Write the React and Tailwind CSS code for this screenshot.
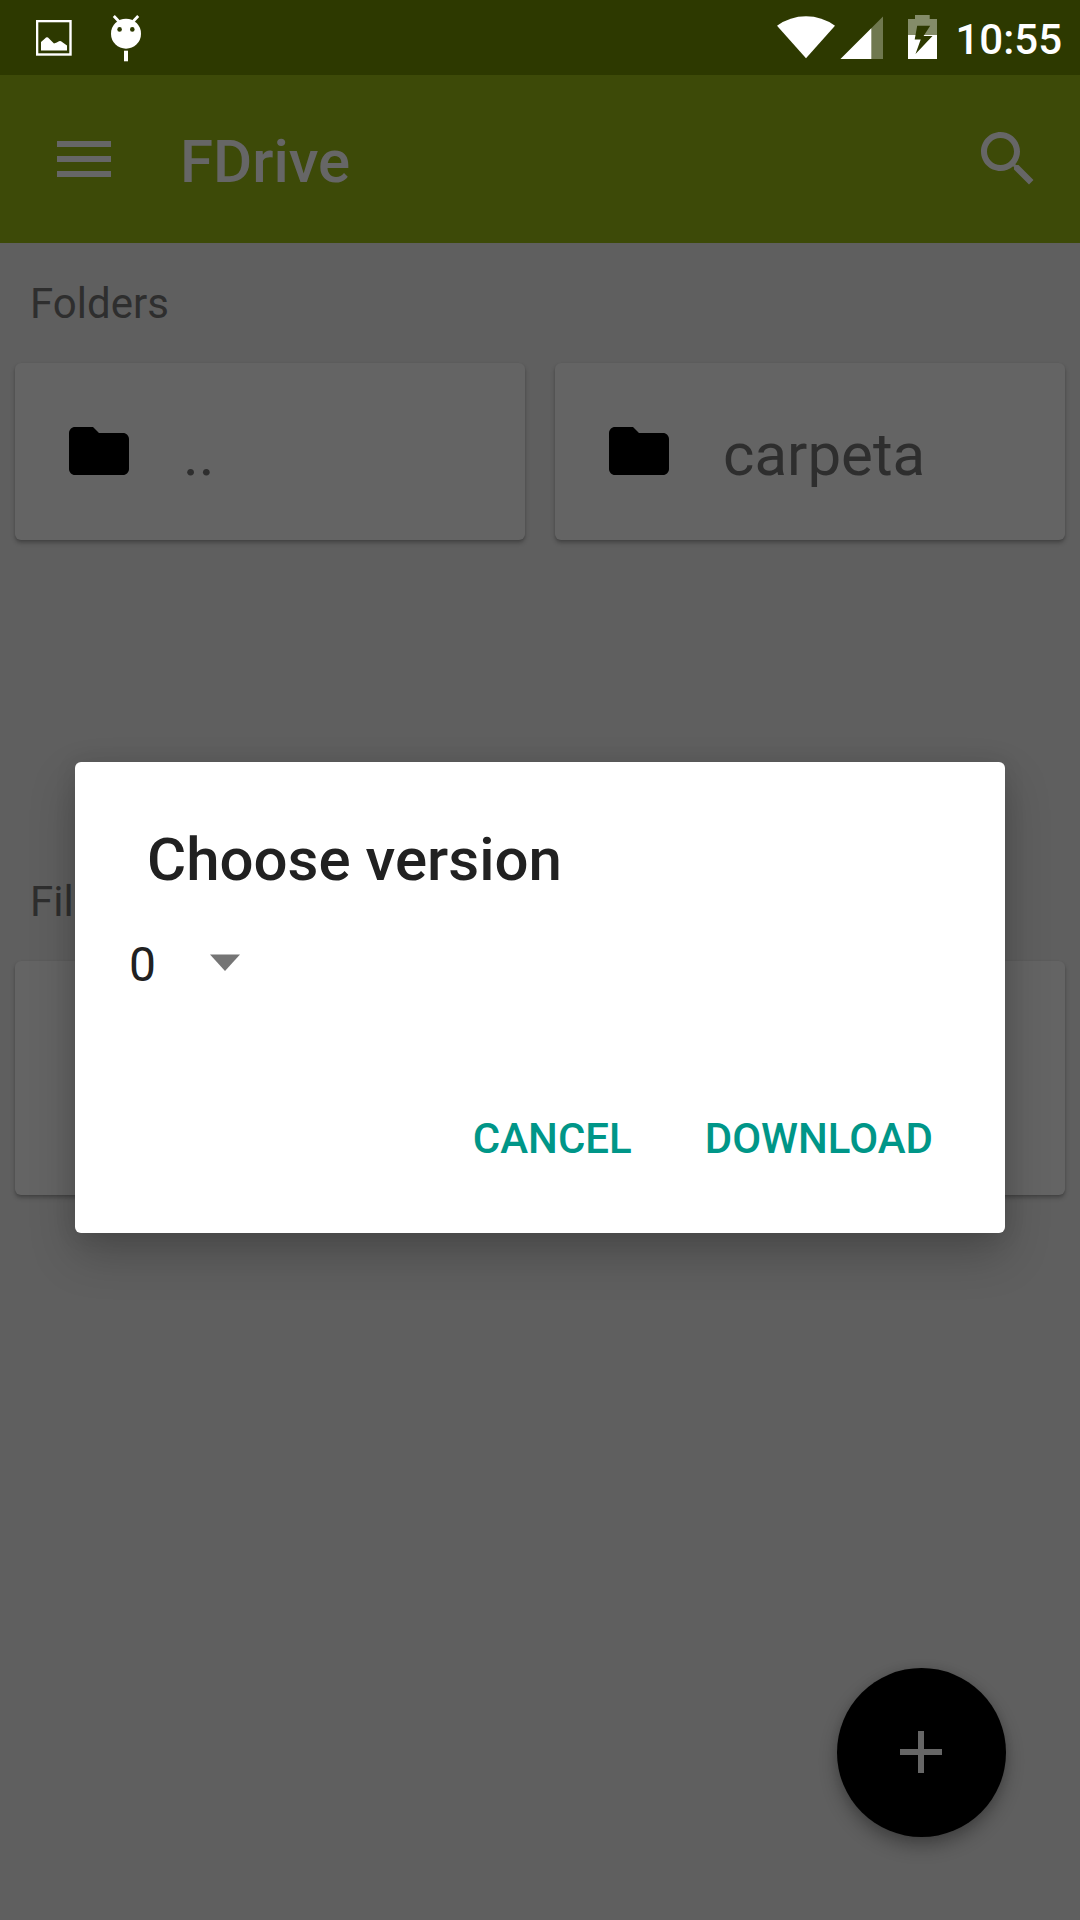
import React from "react";

const cardShadow = "shadow-[0_3px_4px_rgba(0,0,0,0.26),0_1px_2px_rgba(0,0,0,0.08)]";

function StatusBar() {
  return (
    <div className="flex h-[75px] shrink-0 items-start bg-[#2d3900] text-white">
      <svg className="ml-[36px] mt-[20px] h-[36px] w-[36px] shrink-0" viewBox="0 0 36 36">
        <rect x="1.1" y="1.1" width="33.4" height="33.4" fill="none" stroke="white" strokeWidth="2.4" />
        <path d="M5 22 9 18.500Q11 16 13 18.500L18 23.500Q21 22.500 23 21.200 24 20.600 25 21.200L31 25.500V30.500H5Z" fill="white" />
      </svg>
      <svg className="ml-[36px] mt-[14px] h-[48px] w-[36px] shrink-0" viewBox="0 0 36 48">
        <path d="M5.800 2 11 7.500M30.200 2 25 7.500" stroke="white" strokeWidth="2.800" />
        <circle cx="18" cy="19.700" r="15" fill="white" />
        <circle cx="11.600" cy="15.400" r="2.300" fill="#2d3900" />
        <circle cx="24.300" cy="15.400" r="2.300" fill="#2d3900" />
        <rect x="16" y="36.700" width="4" height="10.600" fill="white" />
      </svg>
      <div className="flex-1" />
      <svg className="mt-[16px] h-[43px] w-[58px] shrink-0" viewBox="0 0 58 43">
        <path d="M0 9.700Q13 .2 29 .2T58 9.700L29 42.300Z" fill="white" />
      </svg>
      <svg className="ml-[5px] mt-[16px] h-[43px] w-[43px] shrink-0" viewBox="0 0 43 43">
        <path d="M43 .5V43H.5Z" fill="#6f784f" />
        <path d="M31.300 12.200V43H.5Z" fill="white" />
      </svg>
      <svg className="ml-[25px] mt-[15px] h-[44px] w-[29px] shrink-0" viewBox="0 0 29 44">
        <path d="M7 0H21.700V4H29V20H0V4H7Z" fill="#848c69" />
        <path d="M0 20H29V44H0Z" fill="white" />
        <path d="M9.200 10.700H22.200L15.600 21H24.500L7.500 39L12.700 24.600H6.700Z" fill="#2d3900" />
      </svg>
      <span className="ml-[18px] mr-[18px] mt-[15px] text-[42px] font-medium leading-[49px]">10:55</span>
    </div>
  );
}

function AppBar() {
  return (
    <header className="flex h-[168px] shrink-0 items-center bg-[#3d4a08] text-[#666666]">
      <div className="ml-[57px] flex w-[54px] flex-col gap-[9px]">
        <div className="h-[6px] bg-[#666666]" />
        <div className="h-[6px] bg-[#666666]" />
        <div className="h-[6px] bg-[#666666]" />
      </div>
      <h1 className="ml-[69px] flex-1 pt-[5px] text-[60px] font-medium leading-[70px]">FDrive</h1>
      <svg className="mr-[36px] h-[72px] w-[72px]" viewBox="0 0 24 24" fill="currentColor">
        <path d="M15.500 14h-.79l-.28-.27C15.410 12.590 16 11.110 16 9.500 16 5.910 13.090 3 9.500 3S3 5.910 3 9.500 5.910 16 9.500 16c1.610 0 3.090-.59 4.230-1.570l.27.28v.79l5 4.990L20.490 19l-4.990-5zm-6 0C7.010 14 5 11.990 5 9.500S7.010 5 9.500 5 14 7.010 14 9.500 11.990 14 9.500 14z" />
      </svg>
    </header>
  );
}

function SectionLabel({ children }) {
  return <h2 className="h-[120px] pl-[30px] text-[42px] leading-[121px] text-[#2e2e2e]">{children}</h2>;
}

function FolderCard({ name }) {
  return (
    <div className={`flex h-[177px] flex-1 items-center rounded-[6px] bg-[#646464] pl-[48px] ${cardShadow}`}>
      <svg className="mb-px h-[72px] w-[72px]" viewBox="0 0 24 24" fill="black">
        <path d="M10 4H4c-1.100 0-1.990.9-1.990 2L2 18c0 1.100.9 2 2 2h16c1.100 0 2-.9 2-2V8c0-1.100-.9-2-2-2h-8l-2-2z" />
      </svg>
      <span className="ml-[48px] pt-[7px] text-[60px] leading-[70px] text-[#2e2e2e]">{name}</span>
    </div>
  );
}

function VersionDialog() {
  return (
    <div className="absolute inset-x-[75px] top-[762px] flex h-[471px] flex-col rounded-[6px] bg-white shadow-[0_21px_46px_rgba(0,0,0,0.22),0_2px_22px_rgba(0,0,0,0.09)]">
      <h2 className="ml-[72px] mt-[63px] text-[60px] font-medium leading-[70px] text-[#212121]">Choose version</h2>
      <div className="ml-[54px] mt-[42px] flex h-[56px] items-center">
        <span className="text-[48px] leading-[56px] text-[#212121]">0</span>
        <svg className="mb-[5px] ml-[54px] h-[17px] w-[30px]" viewBox="0 0 30 17">
          <path d="M0 .5H30L15 17Z" fill="#757575" />
        </svg>
      </div>
      <div className="mr-[72px] mt-[121px] flex justify-end gap-[73px] text-[42px] font-medium leading-[50px] text-[#009688]">
        <button>CANCEL</button>
        <button>DOWNLOAD</button>
      </div>
    </div>
  );
}

export default function App() {
  return (
    <div className="relative flex h-[1920px] w-[1080px] flex-col overflow-hidden bg-[#5f5f5f] font-['Roboto',sans-serif]">
      <StatusBar />
      <AppBar />
      <main>
        <section className="h-[598px]">
          <SectionLabel>Folders</SectionLabel>
          <div className="flex gap-[30px] px-[15px]">
            <FolderCard name=".." />
            <FolderCard name="carpeta" />
          </div>
        </section>
        <section>
          <SectionLabel>Files</SectionLabel>
          <div className={`mx-[15px] h-[234px] rounded-[6px] bg-[#646464] ${cardShadow}`} />
        </section>
      </main>
      <button className="absolute bottom-[83.500px] right-[74.500px] flex h-[169px] w-[169px] items-center justify-center rounded-full bg-black shadow-[0_9px_18px_rgba(0,0,0,0.3),0_0_8px_rgba(0,0,0,0.1)]">
        <svg className="h-[42px] w-[42px]" viewBox="0 0 42 42">
          <path d="M18 0h6v18h18v6H24v18h-6V24H0v-6h18z" fill="#666666" />
        </svg>
      </button>
      <VersionDialog />
    </div>
  );
}
